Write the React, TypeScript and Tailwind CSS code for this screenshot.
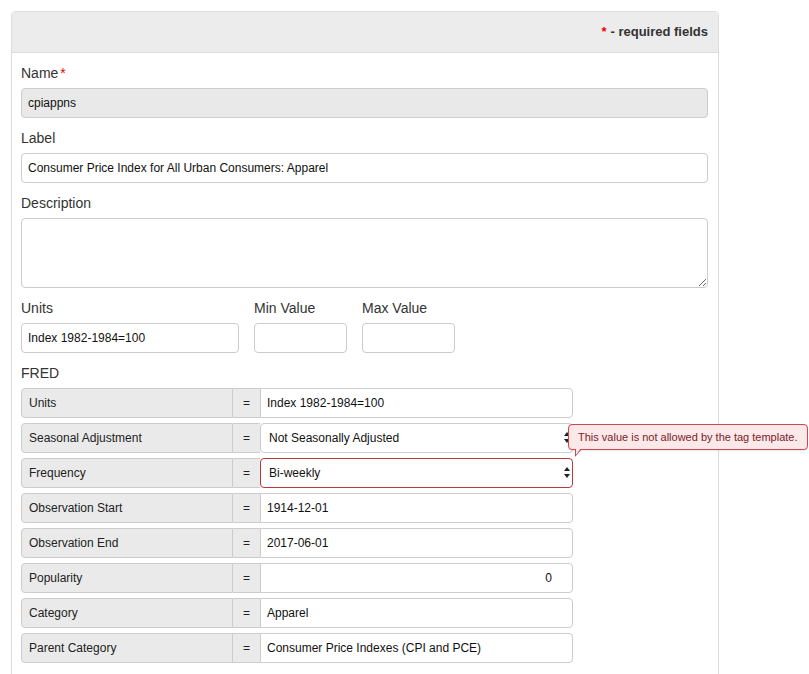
import React from "react";

type FredRow = {
  label: string;
  value: string;
  kind?: "select" | "number";
  invalid?: boolean;
  tooltip?: string;
};

const fredRows: FredRow[] = [
  { label: "Units", value: "Index 1982-1984=100" },
  {
    label: "Seasonal Adjustment",
    value: "Not Seasonally Adjusted",
    kind: "select",
    tooltip: "This value is not allowed by the tag template.",
  },
  { label: "Frequency", value: "Bi-weekly", kind: "select", invalid: true },
  { label: "Observation Start", value: "1914-12-01" },
  { label: "Observation End", value: "2017-06-01" },
  { label: "Popularity", value: "0", kind: "number" },
  { label: "Category", value: "Apparel" },
  { label: "Parent Category", value: "Consumer Price Indexes (CPI and PCE)" },
];

const inputCls =
  "block h-[30px] w-full rounded-[4px] border border-[#ccc] bg-white px-[6px] text-[12px] text-[#111] outline-none";

function SelectArrows() {
  return (
    <svg
      className="pointer-events-none absolute right-[3px] top-[9px]"
      width="6"
      height="11"
      viewBox="0 0 6 11"
    >
      <path d="M3 0 L6 4 L0 4 Z" fill="#222" />
      <path d="M0 7 L6 7 L3 11 Z" fill="#222" />
    </svg>
  );
}

function Field({ label, required, children }: { label: string; required?: boolean; children: React.ReactNode }) {
  return (
    <div className="mb-[10px]">
      <label className="mb-[5px] block h-[20px] text-[14px] leading-[20px] text-[#333]">
        {label}
        {required && <span className="ml-[2px] text-[#e00]">*</span>}
      </label>
      {children}
    </div>
  );
}

function FredLine({ row }: { row: FredRow }) {
  return (
    <div className="relative mb-[5px] flex h-[30px] w-[552px]">
      <div className="flex w-[212px] items-center rounded-l-[4px] border border-[#ccc] bg-[#eaeaea] pl-[7px] text-[12px] text-[#222]">
        {row.label}
      </div>
      <div className="flex w-[27px] items-center justify-center border-y border-[#ccc] bg-[#eaeaea] text-[12px] text-[#222]">
        =
      </div>
      {row.kind === "select" ? (
        <div className="relative flex-1">
          <div
            className={
              row.invalid
                ? "flex h-[30px] items-center rounded-[4px] border border-[#b8393a] bg-white pl-[8px] text-[12px] text-[#111]"
                : "flex h-[30px] items-center rounded-[4px] border border-[#ccc] bg-white pl-[8px] text-[12px] text-[#111]"
            }
          >
            {row.value}
          </div>
          <SelectArrows />
        </div>
      ) : row.kind === "number" ? (
        <div className="flex h-[30px] flex-1 items-center justify-end rounded-r-[4px] border border-[#ccc] bg-white pr-[20px] text-[12px] text-[#111]">
          {row.value}
        </div>
      ) : (
        <div className="flex h-[30px] flex-1 items-center rounded-r-[4px] border border-[#ccc] bg-white pl-[6px] text-[12px] text-[#111]">
          {row.value}
        </div>
      )}
      {row.tooltip && (
        <div className="absolute left-[547px] top-[1px] z-10 whitespace-nowrap rounded-[4px] border border-[#d0464c] bg-[#fbe8e8] px-[9px] py-[5px] text-[11px] leading-[14px] text-[#7a2428] shadow-[0_1px_2px_rgba(0,0,0,0.1)]">
          {row.tooltip}
          <span className="absolute left-[6px] top-full h-0 w-0 border-r-[7px] border-t-[8px] border-r-transparent border-t-[#d0464c]" />
          <span className="absolute left-[7px] top-[calc(100%-1px)] h-0 w-0 border-r-[5px] border-t-[7px] border-r-transparent border-t-[#fbe8e8]" />
        </div>
      )}
    </div>
  );
}

export default function App() {
  return (
    <div className="min-h-screen bg-white px-[11px] pt-[11px] font-['Liberation_Sans',Arial,sans-serif]">
      <div className="w-[708px] rounded-t-[4px] border border-[#ddd]">
        <div className="flex h-[41px] items-center justify-end border-b border-[#ddd] bg-[#ececec] pr-[10px] text-[13px] font-bold text-[#333]">
          <span className="mr-[4px] text-[#e00]">*</span>- required fields
        </div>
        <div className="pb-[30px] pl-[9px] pr-[10px] pt-[10px]">
          <Field label="Name" required>
            <div className={inputCls + " flex items-center !bg-[#e9e9e9]"}>cpiappns</div>
          </Field>
          <Field label="Label">
            <div className={inputCls + " flex items-center"}>
              Consumer Price Index for All Urban Consumers: Apparel
            </div>
          </Field>
          <Field label="Description">
            <textarea className="block h-[70px] w-full rounded-[4px] border border-[#ccc] bg-white px-[6px] py-[5px] text-[12px] outline-none" />
          </Field>
          <div className="flex gap-[15px]">
            <div className="w-[218px]">
              <Field label="Units">
                <div className={inputCls + " flex items-center"}>Index 1982-1984=100</div>
              </Field>
            </div>
            <div className="w-[93px]">
              <Field label="Min Value">
                <div className={inputCls} />
              </Field>
            </div>
            <div className="w-[93px]">
              <Field label="Max Value">
                <div className={inputCls} />
              </Field>
            </div>
          </div>
          <div>
            <label className="mb-[5px] block h-[20px] text-[14px] leading-[20px] text-[#333]">FRED</label>
            {fredRows.map((row) => (
              <FredLine key={row.label} row={row} />
            ))}
          </div>
        </div>
      </div>
    </div>
  );
}
